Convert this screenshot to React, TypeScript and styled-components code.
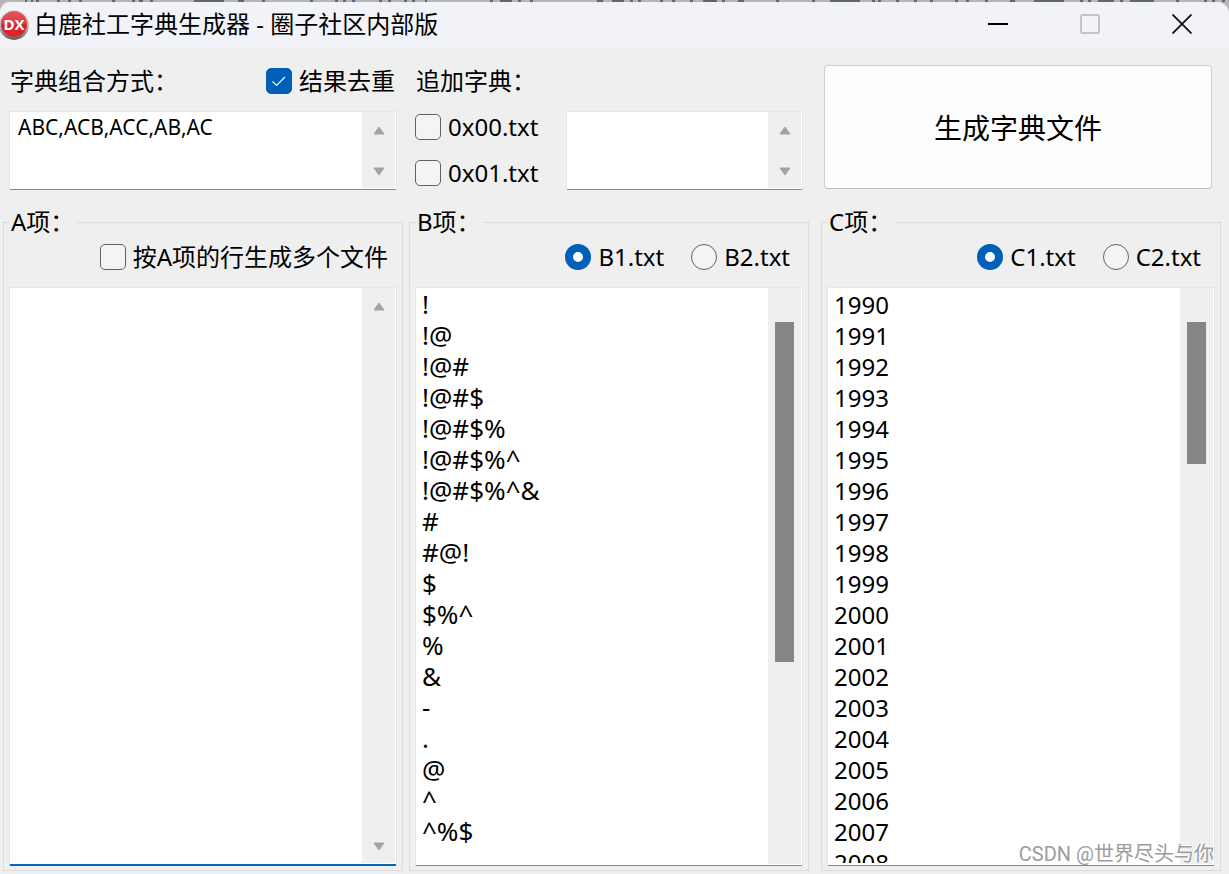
import React, { useState } from 'react';
import styled, { createGlobalStyle, css } from 'styled-components';

const latin = `"Noto Sans", "Noto Sans CJK SC", sans-serif`;

const GlobalStyle = createGlobalStyle`
  *, *::before, *::after { box-sizing: border-box; }
  body { margin: 0; background: #b6b6b8; }
  button, input, textarea { font: inherit; color: inherit; margin: 0; }
`;

const Desktop = styled.div`
  display: flex;
  flex-direction: column;
  min-height: 100vh;
  font: 24px/32px ${latin};
  color: #000;
`;

const Backdrop = styled.svg`
  display: block;
  width: 100%;
  height: 2px;
`;

const Window = styled.div`
  flex: 1;
  display: flex;
  flex-direction: column;
  background: #efefef;
  border-radius: 10px 12px 0 0;
  overflow: hidden;
  position: relative;
`;

const TitleBar = styled.header`
  display: flex;
  align-items: center;
  height: 46px;
  padding: 0 1px 2px 0;
  background: #f1f3f9;
`;

const Logo = styled.svg`
  width: 30px;
  height: 32px;
  flex: none;
`;

const Title = styled.h1`
  flex: 1;
  margin: 0 0 0 4px;
  font-size: 24px;
  font-weight: 400;
  white-space: nowrap;
`;

const Caption = styled.button`
  width: 92px;
  height: 44px;
  padding: 0;
  border: 0;
  background: none;
  display: grid;
  place-items: center;
`;

const Columns = styled.div<{ $grow?: boolean }>`
  display: grid;
  grid-template-columns: minmax(0, 406fr) minmax(0, 412fr) minmax(0, 400fr);
  padding: 0 8px 16px 3px;
  ${(p) => p.$grow && css`flex: 1; padding-bottom: 3px;`}
`;

const TopCell = styled.section<{ $after?: number }>`
  display: flex;
  flex-direction: column;
  padding: 17px 6px 0;
  margin-right: ${(p) => p.$after ?? 0}px;
`;

const HeadRow = styled.div`
  display: flex;
  justify-content: space-between;
  align-items: center;
  height: 32px;
  margin-bottom: 14px;
  padding: 0 2px 0 1px;
  white-space: nowrap;
`;

const Choice = styled.label`
  display: flex;
  align-items: center;
  gap: 7px;
  white-space: nowrap;
`;

const Tick = styled.input.attrs({ type: 'checkbox' })`
  appearance: none;
  flex: none;
  width: 26px;
  height: 26px;
  border: 1px solid #626262;
  border-radius: 5px;
  background: #f4f4f4;
  &:checked {
    border-color: #005fb8;
    background: #005fb8
      url("data:image/svg+xml,%3Csvg xmlns='http://www.w3.org/2000/svg' viewBox='0 0 24 24'%3E%3Cpath d='M5.5 12.5l4 4 8.5-8.500' fill='none' stroke='white' stroke-width='1.200'/%3E%3C/svg%3E")
      center / 24px no-repeat;
  }
`;

const Radio = styled.input.attrs({ type: 'radio' })`
  appearance: none;
  flex: none;
  width: 26px;
  height: 26px;
  border: 1px solid #626262;
  border-radius: 50%;
  background: #f4f4f4;
  &:checked {
    border: 8px solid #005fb8;
    background: #fff;
  }
`;

const Extras = styled.div`
  display: flex;
  justify-content: space-between;
`;

const ExtraChoices = styled.div`
  display: flex;
  flex-direction: column;
  gap: 14px;
`;

const FieldFrame = styled.div<{ $kind: 'small' | 'side' | 'tall' }>`
  display: flex;
  background: #fff;
  border: 1px solid #e6e6e6;
  border-bottom-color: #868686;
  border-radius: 2px;
  ${(p) =>
    p.$kind === 'tall'
      ? css`flex: 1;`
      : css`height: 79px;`}
  ${(p) => p.$kind === 'side' && css`width: 61%;`}
  &:has(textarea[data-active='true']) {
    border-bottom: 2px solid #0067c0;
  }
`;

const TextBox = styled.textarea<{ $look: 'compact' | 'symbols' | 'plain' }>`
  flex: 1;
  min-width: 0;
  display: block;
  resize: none;
  border: 0;
  outline: 0;
  overflow: hidden;
  background: transparent;
  margin-bottom: 2px;
  padding: 1px 6px 0;
  font-size: 24px;
  line-height: 31px;
  ${(p) => p.$look === 'symbols' && css`font-size: 26px;`}
  ${(p) =>
    p.$look === 'compact' &&
    css`
      padding: 0 8px;
      font-size: 21px;
    `}
`;

const Track = styled.div<{ $thumb?: boolean }>`
  flex: none;
  display: flex;
  flex-direction: column;
  align-items: center;
  justify-content: space-between;
  width: 33px;
  margin: 0 1px 1px 0;
  padding: ${(p) => (p.$thumb ? '34px 0' : '14px 0 12px')};
  background: #efefef;
`;

const Thumb = styled.div`
  width: 19px;
  background: #868686;
`;

const Arrow = styled.svg`
  width: 12px;
  height: 9px;
  fill: #a3a3a3;
  stroke: #a3a3a3;
  stroke-width: 1;
  stroke-linejoin: round;
`;

const Generate = styled.button`
  height: 124px;
  margin: 0 3px 0 -3px;
  padding-top: 2px;
  border: 1px solid #d0d0d0;
  border-bottom-color: #bcbcbc;
  border-radius: 4px;
  background: #fdfdfd;
  font-size: 28px;
`;

const Group = styled.fieldset<{ $after?: number }>`
  display: flex;
  flex-direction: column;
  min-width: 0;
  margin: 0;
  margin-right: ${(p) => p.$after ?? 0}px;
  padding: 0 5px 4px;
  border: 1px solid #dcdcdc;
`;

const Legend = styled.legend`
  height: 32px;
  width: 68px;
  padding: 0 0 0 2px;
  white-space: nowrap;
`;

const Options = styled.div<{ $end: number }>`
  display: flex;
  justify-content: flex-end;
  gap: 27px;
  height: 32px;
  margin-top: 3px;
  margin-bottom: 14px;
  padding-right: ${(p) => p.$end}px;
`;

const Watermark = styled.div`
  position: absolute;
  right: 15px;
  bottom: 6px;
  font: 20px/28px "Liberation Sans", "Noto Sans CJK SC", sans-serif;
  font-family: Roboto, "Noto Sans CJK SC", sans-serif;
  color: #9c9c9c;
  text-shadow: -1px -1px 0 #fff;
  pointer-events: none;
`;

const bItems = ['!', '!@', '!@#', '!@#$', '!@#$%', '!@#$%^', '!@#$%^&', '#', '#@!', '$', '$%^', '%', '&', '-', '.', '@', '^', '^%$'];
const cItems = Array.from({ length: 30 }, (_, i) => String(1990 + i));

/* [x, width] of the dark strokes showing from the page behind the window */
const strokes = [
  [25, 2], [31, 2], [36, 3], [57, 3], [68, 3], [79, 3], [112, 3], [132, 3], [139, 4], [150, 3],
  [194, 30], [238, 6], [262, 3], [310, 3], [335, 3], [343, 3], [352, 3], [379, 3], [388, 3], [404, 3],
  [412, 3], [425, 2], [490, 3], [500, 12], [518, 3], [530, 3], [597, 6], [612, 12], [630, 3], [638, 3],
  [660, 3], [672, 3], [690, 3], [703, 14], [722, 3], [738, 6], [776, 3], [812, 3], [830, 30], [872, 3],
  [878, 3], [896, 3], [914, 3], [930, 3], [955, 3], [966, 3], [985, 3], [1010, 5], [1034, 30], [1080, 3],
  [1088, 3], [1098, 16], [1120, 3], [1130, 24], [1176, 3], [1204, 3], [1212, 3], [1222, 3],
];

type FieldProps = {
  label: string;
  kind: 'small' | 'side' | 'tall';
  look?: 'compact' | 'symbols' | 'plain';
  text?: string;
  thumb?: number;
  active?: boolean;
};

function Field({ label, kind, look = 'plain', text = '', thumb, active }: FieldProps) {
  return (
    <FieldFrame $kind={kind}>
      <TextBox aria-label={label} defaultValue={text} $look={look} data-active={active} spellCheck={false} />
      <Track $thumb={thumb !== undefined} aria-hidden>
        {thumb !== undefined ? (
          <Thumb style={{ height: `${thumb}%` }} />
        ) : (
          <>
            <Arrow viewBox="0 0 12 9"><path d="M6 1L11 8H1Z" /></Arrow>
            <Arrow viewBox="0 0 12 9"><path d="M6 8L11 1H1Z" /></Arrow>
          </>
        )}
      </Track>
    </FieldFrame>
  );
}

function RadioPair({ name, end }: { name: string; end: number }) {
  const [value, setValue] = useState(1);
  return (
    <Options $end={end}>
      {[1, 2].map((n) => (
        <Choice key={n}>
          <Radio name={name} checked={value === n} onChange={() => setValue(n)} />
          {`${name}${n}.txt`}
        </Choice>
      ))}
    </Options>
  );
}

export default function App() {
  return (
    <Desktop>
      <GlobalStyle />
      <Backdrop aria-hidden>
        {strokes.map(([x, w]) => (
          <rect key={x} x={x} y="0" width={w} height="2" fill="#63656c" />
        ))}
      </Backdrop>
      <Window>
        <TitleBar>
          <Logo viewBox="0 0 30 32" aria-hidden>
            <defs>
              <linearGradient id="rim" x1="0" y1="0" x2="0" y2="1">
                <stop offset="0" stopColor="#e4e4e4" />
                <stop offset="0.6" stopColor="#b0b0b0" />
                <stop offset="1" stopColor="#5c5c5c" />
              </linearGradient>
              <linearGradient id="face" x1="0" y1="0" x2="0" y2="1">
                <stop offset="0" stopColor="#e4575a" />
                <stop offset="0.5" stopColor="#dd3a3e" />
                <stop offset="0.55" stopColor="#d8201f" />
                <stop offset="1" stopColor="#e0282c" />
              </linearGradient>
            </defs>
            <circle cx="14" cy="17" r="15" fill="url(#rim)" />
            <circle cx="14" cy="16" r="13" fill="url(#face)" />
            <text x="14" y="22" textAnchor="middle" fontFamily="Open Sans, sans-serif" fontWeight="700" fontSize="15" fill="#fff">DX</text>
          </Logo>
          <Title>白鹿社工字典生成器 - 圈子社区内部版</Title>
          <Caption aria-label="最小化">
            <svg width="20" height="20"><path d="M0 10H20" stroke="#000" strokeWidth="2" /></svg>
          </Caption>
          <Caption aria-label="最大化" disabled>
            <svg width="20" height="20"><rect x="1" y="1" width="18" height="18" rx="1.5" fill="none" stroke="#c3c4c8" strokeWidth="2" /></svg>
          </Caption>
          <Caption aria-label="关闭">
            <svg width="20" height="20"><path d="M0.500 0.500L19.500 19.500M19.500 0.500L0.500 19.500" stroke="#111" strokeWidth="1.800" /></svg>
          </Caption>
        </TitleBar>

        <Columns>
          <TopCell $after={6}>
            <HeadRow>
              <span>字典组合方式：</span>
              <Choice><Tick defaultChecked />结果去重</Choice>
            </HeadRow>
            <Field label="字典组合方式" kind="small" look="compact" text="ABC,ACB,ACC,AB,AC" />
          </TopCell>
          <TopCell $after={12}>
            <HeadRow><span>追加字典：</span></HeadRow>
            <Extras>
              <ExtraChoices>
                <Choice><Tick />0x00.txt</Choice>
                <Choice><Tick />0x01.txt</Choice>
              </ExtraChoices>
              <Field label="追加字典" kind="side" look="compact" />
            </Extras>
          </TopCell>
          <TopCell>
            <Generate>生成字典文件</Generate>
          </TopCell>
        </Columns>

        <Columns $grow>
          <Group $after={6}>
            <Legend>A项：</Legend>
            <Options $end={9}>
              <Choice><Tick />按A项的行生成多个文件</Choice>
            </Options>
            <Field label="A项" kind="tall" active />
          </Group>
          <Group $after={12}>
            <Legend>B项：</Legend>
            <RadioPair name="B" end={13} />
            <Field label="B项" kind="tall" look="symbols" text={bItems.join('\n')} thumb={67} />
          </Group>
          <Group>
            <Legend>C项：</Legend>
            <RadioPair name="C" end={14} />
            <Field label="C项" kind="tall" text={cItems.join('\n')} thumb={28} />
          </Group>
        </Columns>
        <Watermark>CSDN @世界尽头与你</Watermark>
      </Window>
    </Desktop>
  );
}
